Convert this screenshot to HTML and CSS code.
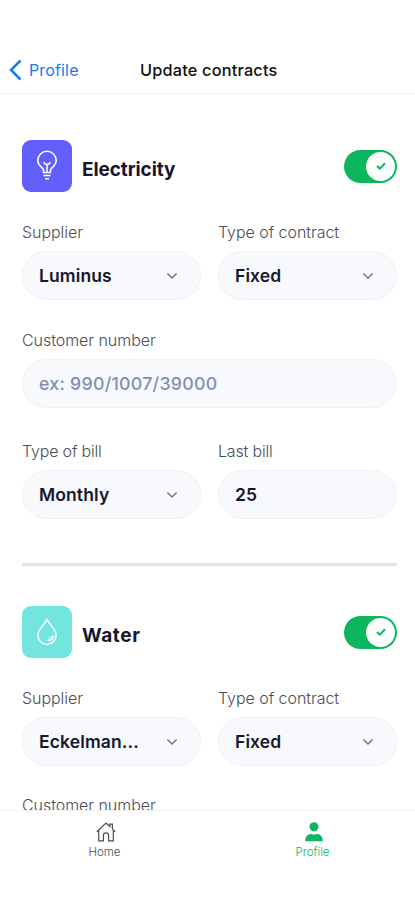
FILE: index.html
```html
<!DOCTYPE html>
<html lang="en">
<head>
<meta charset="utf-8">
<title>Update contracts</title>
<link rel="stylesheet" href="styles.css">
</head>
<body>
<svg width="0" height="0" class="defs">
  <symbol id="chevron" viewBox="0 0 12 8"><path d="M1.400 1.500 6 6l4.600-4.500" fill="none" stroke="currentColor" stroke-width="1.600"/></symbol>
  <symbol id="check" viewBox="0 0 12 10"><path d="M2 5 4.800 7.600 10 2.300" fill="none" stroke="currentColor" stroke-width="2"/></symbol>
</svg>
<div class="app">
  <header class="navbar">
    <a class="back"><svg width="13" height="22" viewBox="0 0 13 22"><path d="M11.500 1.500 2 11l9.500 9.500" fill="none" stroke="currentColor" stroke-width="2.500"/></svg><span>Profile</span></a>
    <h1>Update contracts</h1>
  </header>
  <main>
    <section>
      <div class="head">
        <div class="tile electricity">
          <svg width="24" height="32" viewBox="0 0 24 32" fill="none" stroke="currentColor" stroke-width="1.500">
            <path d="M8.500 22.500v-2.700C8 17.500 2.800 16 2.800 10.500a9.200 9.200 0 0 1 18.400 0c0 5.500-5.200 7-5.700 9.300v2.700Z"/>
            <path d="M12 22v-7.500M9 12.200c.2 1.500 1 2.300 3 2.300s2.800-.8 3-2.300M8.500 25.500h7M10 28.700h4"/>
          </svg>
        </div>
        <h2 class="title-electricity">Electricity</h2>
        <div class="toggle"><span class="knob"><svg width="12" height="10"><use href="#check"/></svg></span></div>
      </div>
      <div class="fields">
        <div class="field"><label>Supplier</label><div class="box"><b>Luminus</b><svg width="12" height="8"><use href="#chevron"/></svg></div></div>
        <div class="field"><label>Type of contract</label><div class="box"><b>Fixed</b><svg width="12" height="8"><use href="#chevron"/></svg></div></div>
        <div class="field wide"><label>Customer number</label><div class="box"><span class="placeholder">ex: 990/1007/39000</span></div></div>
        <div class="field"><label class="narrow">Type of bill</label><div class="box"><b>Monthly</b><svg width="12" height="8"><use href="#chevron"/></svg></div></div>
        <div class="field"><label class="narrow">Last bill</label><div class="box"><b>25</b></div></div>
      </div>
    </section>
    <hr>
    <section>
      <div class="head">
        <div class="tile water">
          <svg width="24" height="32" viewBox="0 0 24 32" fill="none" stroke="currentColor" stroke-width="1.500">
            <path d="M12 3.500C9.500 8.500 2.800 13.800 2.800 19.300a9.200 9.200 0 0 0 18.400 0C21.200 13.800 14.500 8.500 12 3.500Z"/>
            <path d="M13 25c3.200-.3 5.400-2.300 5.800-5.300M13 25c.2-1.800 3.800-4.700 5.800-5.300" stroke-width="1.200"/>
          </svg>
        </div>
        <h2 class="title-water">Water</h2>
        <div class="toggle"><span class="knob"><svg width="12" height="10"><use href="#check"/></svg></span></div>
      </div>
      <div class="fields">
        <div class="field"><label>Supplier</label><div class="box"><b>Eckelman...</b><svg width="12" height="8"><use href="#chevron"/></svg></div></div>
        <div class="field"><label>Type of contract</label><div class="box"><b>Fixed</b><svg width="12" height="8"><use href="#chevron"/></svg></div></div>
        <div class="field wide last"><label>Customer number</label><div class="box"></div></div>
      </div>
    </section>
  </main>
  <nav class="tabs">
    <a class="tab"><svg width="22" height="22" viewBox="0 0 22 22" fill="none" stroke="currentColor" stroke-width="1.200"><path d="M1.800 10.800 11 2l3.800 3.600V3.200h2.600v4.900l2.800 2.700M3.700 9.500v10.300h4.700v-5.300a2.600 2.600 0 0 1 5.200 0v5.300h4.700V9.500"/></svg><span>Home</span></a>
    <a class="tab active"><svg width="22" height="22" viewBox="0 0 22 22" fill="currentColor"><circle cx="11" cy="5.800" r="4.500"/><path d="M2.300 20.200v-1c0-4 2.800-6.300 5.600-6.300 1 .5 2 .7 3.100.7s2.100-.2 3.100-.7c2.800 0 5.600 2.300 5.600 6.300v1Z"/></svg><span>Profile</span></a>
  </nav>
</div>
</body>
</html>
```
FILE: styles.css
```css
* { box-sizing: border-box; }
body { margin: 0; background: #fff; font-family: Inter, "Liberation Sans", sans-serif; color: #17162f; }
svg { display: block; flex: none; }
.defs { position: absolute; }
.app { height: 900px; display: flex; flex-direction: column; overflow: hidden; }
.navbar { height: 94px; flex: none; padding: 46px 0 0 9px; display: grid; grid-template-columns: 131px 1fr; align-items: center; border-bottom: 1px solid #efeff0; }
.back { display: flex; align-items: center; gap: 7px; color: #147cf5; font-size: 16px; letter-spacing: 0.15px; }
h1 { margin: 0; font-size: 16.3px; font-weight: 550; color: #111; white-space: nowrap; letter-spacing: 0.2px; }
main { flex: 1; min-height: 0; overflow: hidden; padding: 46px 18px 0 22px; }
.head { height: 52px; display: flex; align-items: center; }
.tile { width: 50px; height: 52px; border-radius: 9px; display: flex; align-items: center; justify-content: center; color: #fff; }
.electricity { background: #625efb; }
.water { background: #73e5df; }
h2 { margin: 7px 0 0 10px; font-size: 19px; font-weight: 700; line-height: 26px; }
.title-electricity { letter-spacing: -0.08px; }
.title-water { letter-spacing: 0.6px; }
.toggle { width: 53px; height: 33px; margin-left: auto; border-radius: 17px; background: #0bb65f; padding: 2px; display: flex; justify-content: flex-end; }
.knob { width: 29px; height: 29px; border-radius: 50%; background: #fff; color: #0bb65f; display: flex; align-items: center; justify-content: center; }
.fields { display: grid; grid-template-columns: 179px 179px; column-gap: 17px; margin-top: 30px; }
.field { height: 107px; }
.field.wide { grid-column: 1 / 3; height: 112px; padding-top: 1px; }
.field.last { padding-top: 0; }
label { display: block; height: 20px; line-height: 20px; font-size: 16px; font-weight: 300; color: #4c4c58; white-space: nowrap; letter-spacing: -0.05px; }
.narrow { letter-spacing: -0.18px; }
.box { height: 49px; margin-top: 9px; border: 1px solid #eff1f6; border-radius: 25px; background: #f7f9fd; padding: 0 22px 0 16px; display: flex; align-items: center; justify-content: space-between; color: #77798a; }
.box b { font-size: 17.5px; font-weight: 600; color: #17162f; letter-spacing: 0.12px; }
.placeholder { font-size: 17.8px; font-weight: 500; color: #8490b3; letter-spacing: 0.24px; }
hr { margin: 15px 0 40px; border: 0; height: 3px; background: #e2e2e3; }
.tabs { height: 90px; flex: none; border-top: 1px solid #f1f1f2; display: grid; grid-template-columns: 1fr 1fr; background: #fff; padding-left: 1px; }
.tab { display: flex; flex-direction: column; align-items: center; padding-top: 10px; font-size: 11.5px; font-weight: 300; color: #4d4d55; line-height: 16px; gap: 1px; }
.tab svg { position: relative; left: 1px; }
.active { color: #0bb65f; padding-left: 2px; }
```
